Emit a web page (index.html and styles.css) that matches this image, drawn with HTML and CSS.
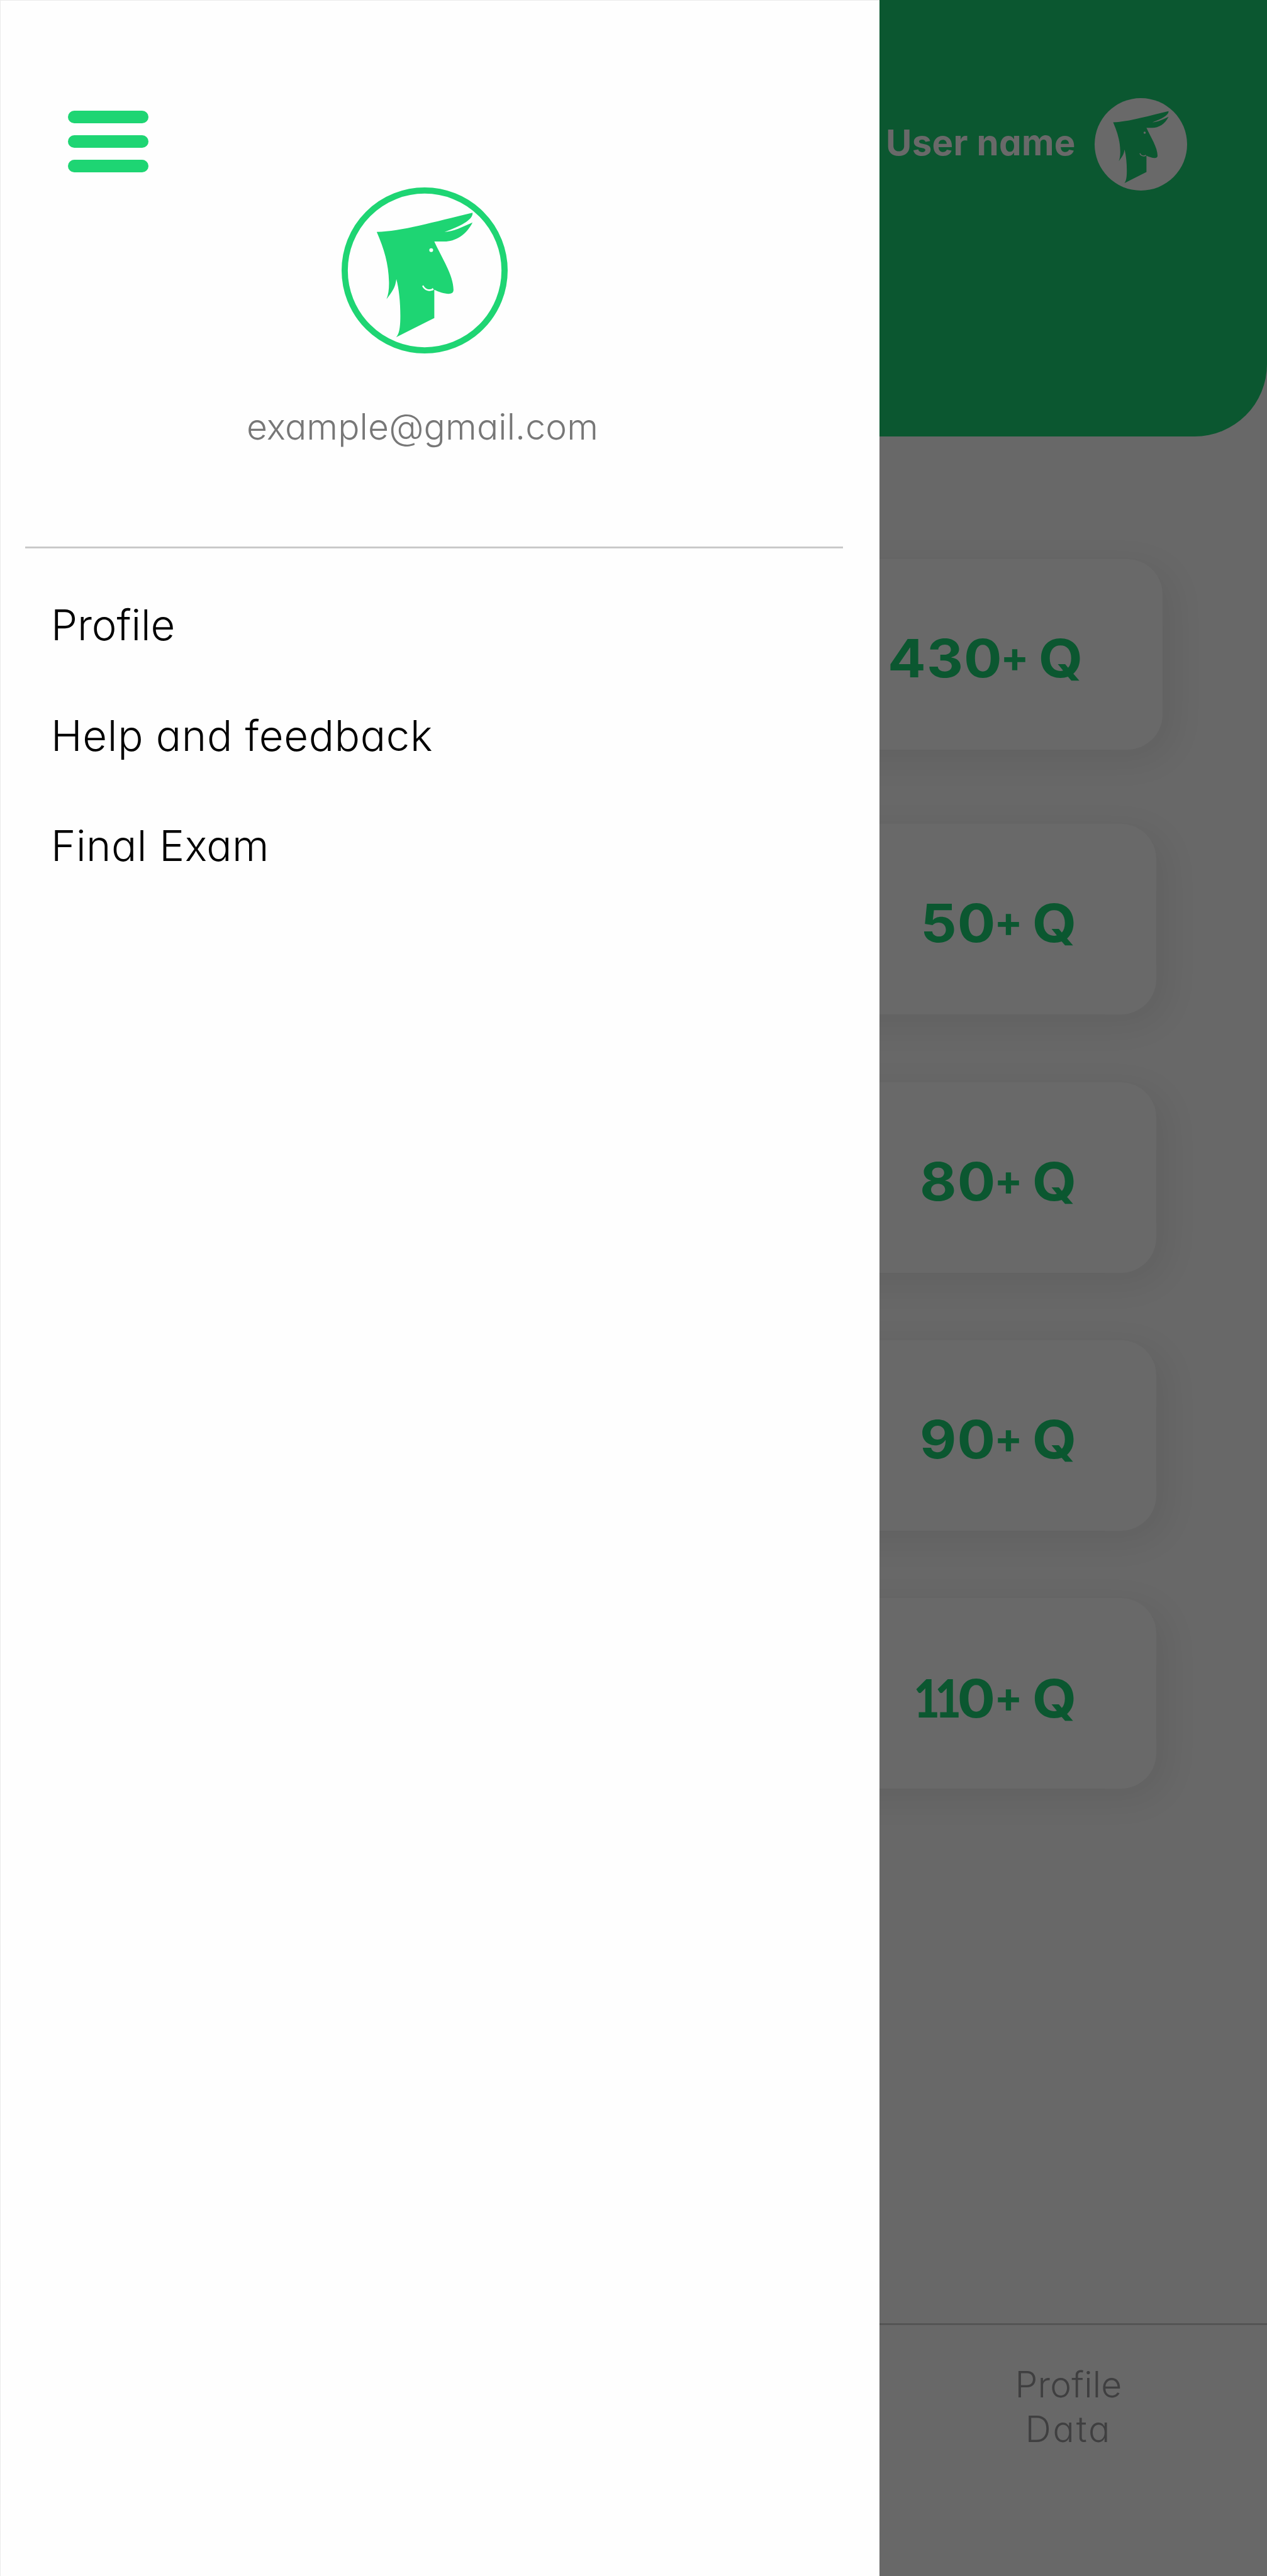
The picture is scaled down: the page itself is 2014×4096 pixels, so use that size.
FILE: index.html
```html
<!DOCTYPE html>
<html lang="en">
<head>
<meta charset="utf-8">
<title>Menu</title>
<link rel="stylesheet" href="styles.css">
</head>
<body>
<svg class="defs" width="0" height="0" aria-hidden="true">
  <symbol id="face" viewBox="96 71 1125 1125" overflow="visible">
    <path class="head" fill-rule="evenodd" d="M334 373C500 370 720 305 983 243C988 290 900 335 793 373C850 372 920 337 983 309C940 395 865 438 792 438L724 438C775 550 853 665 854 765C854 785 842 792 820 792C790 792 755 780 724 765L724 956L465 1086C490 1063 494 1000 494 940C494 850 485 760 467 692C460 740 450 765 400 828C414 795 418 755 417 710C414 590 385 490 334 373ZM690 496a13 13 0 1 0 26 0a13 13 0 1 0 -26 0Z"/>
    <path class="smile" d="M646 737C660 767 690 774 716 761M708 757L717 766"/>
  </symbol>
</svg>
<aside class="drawer">
  <button class="burger" aria-label="Menu"><i></i><i></i><i></i></button>
  <svg class="logo" viewBox="96 71 1125 1125">
    <circle cx="658.5" cy="633.5" r="541.5"/>
    <use href="#face" x="96" y="71" width="1125" height="1125"/>
  </svg>
  <p class="email">example@gmail.com</p>
  <hr class="divider">
  <nav class="menu">
    <a class="profile">Profile</a>
    <a class="help">Help and feedback</a>
    <a class="exam">Final Exam</a>
  </nav>
</aside>
<main class="page">
  <header class="top">
    <span class="name">User name</span>
    <svg class="avatar" viewBox="117 90 1083 1083">
      <circle cx="658.5" cy="631.5" r="541.5"/>
      <use href="#face" x="96" y="71" width="1125" height="1125"/>
    </svg>
  </header>
  <section class="cards">
    <div class="card first"><span><span class="num">430</span><span class="plus">+</span> <span class="q">Q</span></span></div>
    <div class="card"><span><span class="num">50</span><span class="plus">+</span> <span class="q">Q</span></span></div>
    <div class="card"><span><span class="num">80</span><span class="plus">+</span> <span class="q">Q</span></span></div>
    <div class="card"><span><span class="num">90</span><span class="plus">+</span> <span class="q">Q</span></span></div>
    <div class="card"><span><span class="num"><span class="ones">11</span>0</span><span class="plus">+</span> <span class="q">Q</span></span></div>
  </section>
  <footer class="tab"><span>Profile</span><span class="data">Data</span></footer>
</main>
</body>
</html>
```
FILE: styles.css
```css
* { box-sizing: border-box; margin: 0; padding: 0; }
body {
  display: flex;
  width: 2014px;
  height: 4096px;
  overflow: hidden;
  background: #686868;
  font-family: Inter, Lato, sans-serif;
  font-feature-settings: "cv11";
}
.defs { position: absolute; }
.head { stroke: none; }
.smile { fill: none; stroke-width: 11; }

.drawer {
  flex: none;
  width: 1398px;
  height: 4096px;
  background: #fefefe;
  border: solid #ebebeb;
  border-width: 1px 0 0 1px;
  padding-top: 175px;
  display: flex;
  flex-direction: column;
}
.burger {
  margin-left: 107px;
  width: 128px;
  height: 98px;
  border: 0;
  background: none;
  display: flex;
  flex-direction: column;
  justify-content: space-between;
}
.burger i { display: block; width: 128px; height: 20px; border-radius: 10px; background: #1ed573; }
.logo { width: 264px; height: 264px; margin: 24px 0 0 542px; fill: #1ed573; }
.logo circle { fill: none; stroke: #1ed573; stroke-width: 42; }
.logo use { stroke: #fefefe; }
.email {
  margin: 82px 0 0 391px;
  font-size: 57px;
  line-height: 70px;
  font-weight: 270;
  letter-spacing: .1px;
  color: #777;
  white-space: nowrap;
}
.divider { border: 0; height: 3px; margin: 155px 58px 0 39px; background: #c9c9c9; }
.menu { display: flex; flex-direction: column; padding: 34px 0 0 80px; }
.menu a { font-size: 67px; line-height: 175.6px; font-weight: 280; color: #000; }
.profile { letter-spacing: -.1px; }
.help { letter-spacing: .7px; }
.exam { letter-spacing: .5px; }

.page { flex: 1; display: flex; flex-direction: column; overflow: hidden; }
.top {
  flex: none;
  height: 694px;
  display: flex;
  align-items: flex-start;
  padding: 156px 127px 0 10px;
  background: #0b5730;
  border-bottom-right-radius: 115px;
}
.name {
  margin-top: 36px;
  font-size: 56.5px;
  line-height: 70px;
  font-weight: 650;
  letter-spacing: .3px;
  color: #696969;
  white-space: nowrap;
}
.avatar { width: 147px; height: 147px; margin-left: auto; fill: #0b5730; }
.avatar circle { fill: #696969; }
.avatar use { stroke: #696969; }

.cards { display: flex; flex-direction: column; gap: 107.3px; padding: 195px 176px 0 0; margin-left: -120px; }
.card {
  height: 303px;
  display: flex;
  justify-content: flex-end;
  padding: 103px 127px 0 0;
  border-radius: 56px;
  background: #696969;
  box-shadow: 14px 14px 56px rgba(0, 0, 0, .075);
  color: #0b5730;
  font-size: 84px;
  line-height: 110px;
  font-weight: 700;
  letter-spacing: 1px;
  white-space: nowrap;
}
.first { margin-right: -10px; margin-bottom: 11px; }
.num { display: inline-block; transform: scaleX(1.07); transform-origin: right; }
.plus { font-size: 67px; line-height: 0; position: relative; top: -9px; margin-left: -3px; letter-spacing: 0; }
.q { display: inline-block; margin-left: -1px; letter-spacing: 0; transform: scaleX(1.08); transform-origin: right; }
.ones {
  display: inline-block;
  font-family: Lato, sans-serif;
  font-weight: 900;
  letter-spacing: -9px;
  margin-right: 1px;
  transform: scaleX(.8);
  transform-origin: right;
}

.tab {
  margin-top: auto;
  height: 402px;
  border-top: 3px solid #545454;
  padding: 60px 15px 0 0;
  display: flex;
  flex-direction: column;
  align-items: center;
  font-size: 57px;
  line-height: 70.6px;
  font-weight: 270;
  letter-spacing: .2px;
  color: #3f3f40;
}
.data { letter-spacing: 2.8px; }
```
